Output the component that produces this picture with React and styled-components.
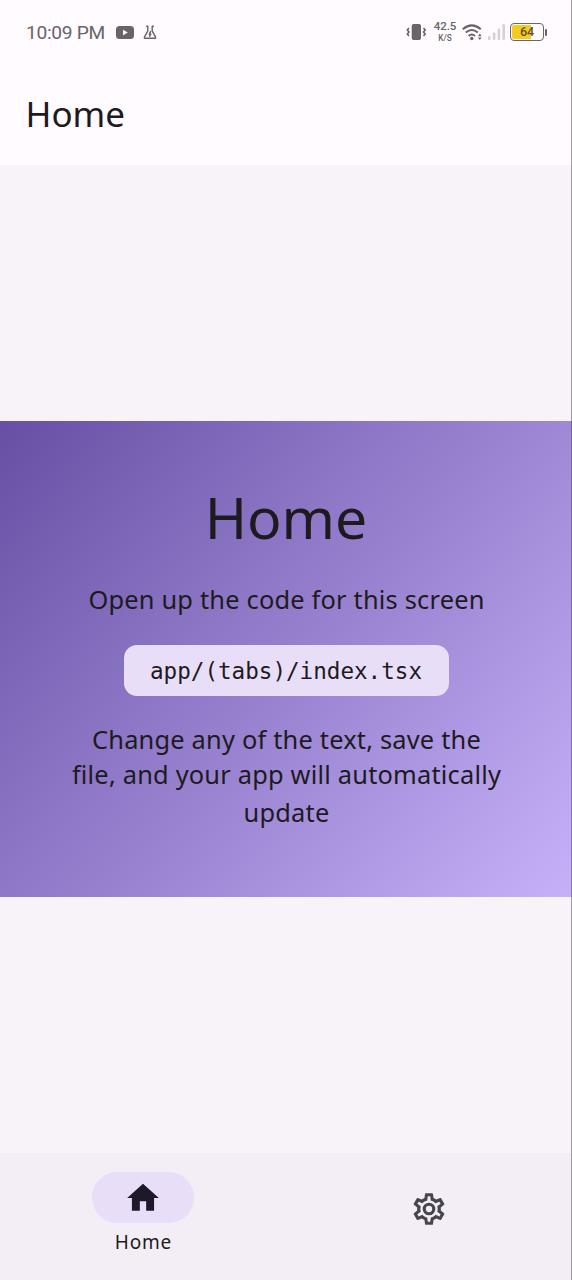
import React from "react";
import styled, { createGlobalStyle } from "styled-components";

const GlobalStyle = createGlobalStyle`
  * { box-sizing: border-box; }
  body { margin: 0; background: #f7f3f9; }
`;

const Screen = styled.div`
  position: relative;
  display: flex;
  flex-direction: column;
  width: 572px;
  height: 1280px;
  overflow: hidden;
  background: #f7f3f9;
  color: #1d1b20;
  font-family: "Noto Sans", sans-serif;
`;

const EdgeLine = styled.div`
  position: absolute;
  top: 0;
  right: 0;
  width: 1px;
  height: 100%;
  background: rgba(70, 65, 75, 0.5);
`;

const TopArea = styled.header`
  height: 165px;
  background: #fffbff;
`;

const StatusBar = styled.div`
  display: flex;
  align-items: center;
  justify-content: space-between;
  height: 64px;
  padding: 0 25px 0 26px;
  color: #67646a;
  font-family: Roboto, sans-serif;
`;

const StatusGroup = styled.div`
  display: flex;
  align-items: center;
`;

const Clock = styled.span`
  width: 90px;
  padding-top: 2px;
  font-size: 19.2px;
  line-height: 24px;
  letter-spacing: -0.3px;
  white-space: nowrap;
  font-weight: 400;
`;

const Speed = styled.div`
  display: flex;
  flex-direction: column;
  align-items: center;
  width: 24px;
  margin: 0 5px 0 6px;
`;

const SpeedValue = styled.span`
  font-weight: 500;
  font-size: 11.5px;
  line-height: 13px;
  letter-spacing: -0.1px;
`;

const SpeedUnit = styled.span`
  font-weight: 500;
  font-size: 8.2px;
  line-height: 10px;
  margin-bottom: 2px;
`;

const Icon = styled.svg`
  display: block;
  flex: none;
  margin-left: ${(p) => p.$gap || 0}px;
`;

const Battery = styled.div`
  display: flex;
  align-items: center;
  margin-left: 4px;
`;

const BatteryBody = styled.div`
  width: 34px;
  height: 18px;
  padding: 1px;
  border: 1.5px solid #67646a;
  border-radius: 4px;
`;

const BatteryLevel = styled.div`
  display: flex;
  align-items: center;
  justify-content: center;
  height: 100%;
  border-radius: 2px;
  background: linear-gradient(90deg, #f6cb1e 64%, transparent 64%);
  color: #57503f;
  font-size: 12.5px;
  font-weight: 500;
  line-height: 14px;
  letter-spacing: -0.2px;
`;

const BatteryTip = styled.div`
  width: 2px;
  height: 7px;
  margin-left: 1px;
  border-radius: 1px;
  background: #67646a;
`;

const AppTitle = styled.h1`
  margin: 0;
  padding: 26px 0 0 25.5px;
  font-size: 35px;
  line-height: 48px;
  font-weight: 400;
`;

const Main = styled.main`
  flex: 1;
  display: flex;
  flex-direction: column;
  justify-content: center;
`;

const Hero = styled.section`
  display: flex;
  flex-direction: column;
  align-items: center;
  height: 476px;
  padding-top: 58px;
  background: linear-gradient(129.8deg, #6750a4, #c6b1f9);
`;

const HeroTitle = styled.h2`
  margin: 0;
  font-size: 57.2px;
  line-height: 76px;
  font-weight: 400;
`;

const Line = styled.span`
  display: block;
  height: ${(p) => p.$height || 38}px;
  font-size: 25.4px;
  line-height: 38px;
  letter-spacing: 0.2px;
  white-space: nowrap;
  text-align: center;
`;

const Paragraph = styled.p`
  margin: ${(p) => p.$top}px 0 0;
  padding-left: 1px;
`;

const CodeChip = styled.code`
  display: flex;
  align-items: center;
  justify-content: center;
  width: 325px;
  height: 51px;
  margin-top: 27px;
  border-radius: 13px;
  background: #e8def8;
  font-family: "DejaVu Sans Mono", monospace;
  font-size: 22.6px;
  line-height: 30px;
`;

const TabBar = styled.nav`
  display: flex;
  height: 127px;
  background: #f3edf6;
`;

const Tab = styled.div`
  flex: 1;
  display: flex;
  flex-direction: column;
  align-items: center;
  padding-top: ${(p) => (p.$active ? 19 : 37)}px;
  color: #49454f;
`;

const Pill = styled.div`
  display: flex;
  align-items: center;
  justify-content: center;
  width: 102px;
  height: 51px;
  border-radius: 26px;
  background: #e8def8;
  color: #1d192b;
`;

const TabLabel = styled.span`
  margin-top: 6px;
  padding-left: 1px;
  font-size: 19px;
  line-height: 26px;
  letter-spacing: 0.8px;
  color: #1d1b20;
`;

const COG =
  "M12 8a4 4 0 0 1 4 4a4 4 0 0 1-4 4a4 4 0 0 1-4-4a4 4 0 0 1 4-4m0 2a2 2 0 0 0-2 2a2 2 0 0 0 2 2a2 2 0 0 0 2-2a2 2 0 0 0-2-2m-2 12c-.25 0-.46-.18-.5-.42l-.37-2.65c-.63-.25-1.17-.59-1.69-.99l-2.49 1.01c-.22.08-.49 0-.61-.22l-2-3.46a.493.493 0 0 1 .12-.64l2.11-1.66L4.5 12l.07-1l-2.11-1.63a.493.493 0 0 1-.12-.64l2-3.46c.12-.22.39-.31.61-.22l2.49 1c.52-.39 1.06-.73 1.69-.98l.37-2.65c.04-.24.25-.42.5-.42h4c.25 0 .46.18.5.42l.37 2.65c.63.25 1.17.59 1.69.98l2.49-1c.22-.09.49 0 .61.22l2 3.46c.13.22.07.49-.12.64L19.43 11l.07 1l-.07 1l2.11 1.63c.19.15.25.42.12.64l-2 3.46c-.12.22-.39.31-.61.22l-2.49-1c-.52.39-1.06.73-1.69.98l-.37 2.65c-.04.24-.25.42-.5.42zm1.25-18l-.37 2.61c-1.2.25-2.26.89-3.03 1.78L5.44 7.35l-.75 1.3L6.8 10.2a5.55 5.55 0 0 0 0 3.6l-2.12 1.56l.75 1.3l2.43-1.04c.77.88 1.82 1.52 3.01 1.76l.37 2.62h1.52l.37-2.61c1.19-.25 2.24-.89 3.01-1.77l2.43 1.04l.75-1.3l-2.12-1.55c.4-1.17.4-2.44 0-3.61l2.11-1.55l-.75-1.3l-2.41 1.04a5.42 5.42 0 0 0-3.03-1.77L12.75 4z";

const VideoIcon = () => (
  <Icon width="18" height="13" viewBox="0 0 18 13">
    <rect width="18" height="13" rx="3.5" fill="#67646a" />
    <path d="M7 3.7v5.6l4.8-2.8z" fill="#fffbff" />
  </Icon>
);

const FlaskIcon = () => (
  <Icon $gap={9} width="14" height="15" viewBox="0 0 14 15" fill="none" stroke="#67646a" strokeWidth="1.4" strokeLinejoin="round" strokeLinecap="round">
    <path d="M3.6 1.2h1.2v4.6L1.4 12.2q-.3 1.1.8 1.1h9.6q1.1 0 .8-1.1L9.2 5.8V1.2h1.2" />
    <path d="M7.6 6.6 6.2 9.2h1.6L6.6 11.4" />
  </Icon>
);

const VibrateIcon = () => (
  <Icon width="21" height="16" viewBox="0 0 21 16">
    <rect x="5.7" width="9.3" height="16" rx="2" fill="#67646a" />
    <path d="M3 4 1.3 6 3 8 1.3 10 3 12M17.5 4l1.7 2-1.7 2 1.7 2-1.7 2" fill="none" stroke="#67646a" strokeWidth="1.6" />
  </Icon>
);

const WifiIcon = () => (
  <Icon width="21" height="17" viewBox="0 0 21 17">
    <g fill="none" stroke="#67646a" strokeWidth="2">
      <path d="M.8 5.2q9-7.6 18 0" />
      <path d="M3.8 8.6q6-5.2 12 0" />
      <path d="M6.6 11.9q3.2-2.8 6.4 0" />
    </g>
    <circle cx="9.8" cy="14.5" r="1.7" fill="#67646a" />
    <path d="M16 12.2 17.8 9.6l1.8 2.6zM16 13.4l1.8 2.6 1.8-2.6z" fill="#67646a" />
  </Icon>
);

const SignalIcon = () => (
  <Icon $gap={5} width="18" height="16" viewBox="0 0 18 16" fill="#d5d1d7">
    <rect x="0" y="12" width="2.6" height="4" rx=".8" />
    <rect x="4.8" y="8.5" width="2.6" height="7.5" rx=".8" />
    <rect x="9.6" y="4.5" width="2.6" height="11.5" rx=".8" />
    <rect x="14.4" y="0" width="2.6" height="16" rx=".8" />
  </Icon>
);

export default function App() {
  return (
    <Screen>
      <GlobalStyle />
      <TopArea>
        <StatusBar>
          <StatusGroup>
            <Clock>10:09 PM</Clock>
            <VideoIcon />
            <FlaskIcon />
          </StatusGroup>
          <StatusGroup>
            <VibrateIcon />
            <Speed>
              <SpeedValue>42.5</SpeedValue>
              <SpeedUnit>K/S</SpeedUnit>
            </Speed>
            <WifiIcon />
            <SignalIcon />
            <Battery>
              <BatteryBody>
                <BatteryLevel>64</BatteryLevel>
              </BatteryBody>
              <BatteryTip />
            </Battery>
          </StatusGroup>
        </StatusBar>
        <AppTitle>Home</AppTitle>
      </TopArea>
      <Main>
        <Hero>
          <HeroTitle>Home</HeroTitle>
          <Paragraph $top={25}>
            <Line>Open up the code for this screen</Line>
          </Paragraph>
          <CodeChip>app/(tabs)/index.tsx</CodeChip>
          <Paragraph $top={24}>
            <Line $height={35}>Change any of the text, save the</Line>
            <Line>file, and your app will automatically</Line>
            <Line>update</Line>
          </Paragraph>
        </Hero>
      </Main>
      <TabBar>
        <Tab $active>
          <Pill>
            <Icon width="38" height="38" viewBox="0 0 24 24" fill="currentColor">
              <path d="M10 20v-6h4v6h5v-8h3L12 3 2 12h3v8z" />
            </Icon>
          </Pill>
          <TabLabel>Home</TabLabel>
        </Tab>
        <Tab>
          <Icon width="38" height="38" viewBox="0 0 24 24" fill="currentColor">
            <path d={COG} />
          </Icon>
        </Tab>
      </TabBar>
      <EdgeLine />
    </Screen>
  );
}
